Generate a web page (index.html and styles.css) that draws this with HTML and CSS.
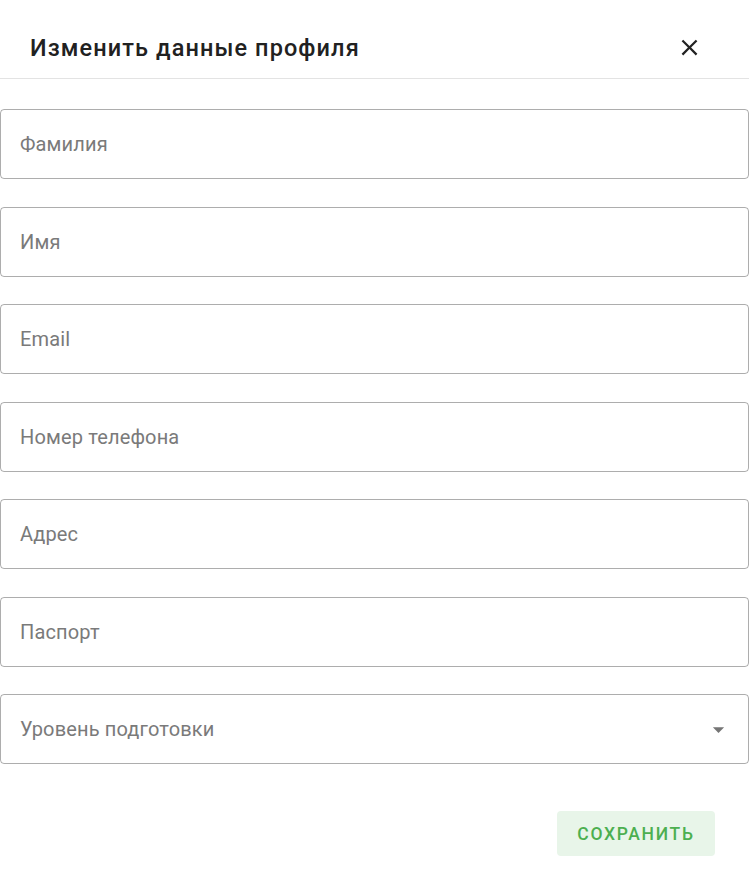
FILE: index.html
```html
<!DOCTYPE html>
<html lang="ru">
<head>
<meta charset="utf-8">
<link rel="stylesheet" href="styles.css">
</head>
<body>
<div class="dialog">
  <div class="dialog-header">
    <h2 class="dialog-title">Изменить данные профиля</h2>
    <button class="close-btn" aria-label="Закрыть">
      <svg viewBox="0 0 24 24" width="27" height="27"><path d="M19 6.41 17.59 5 12 10.59 6.41 5 5 6.41 10.59 12 5 17.59 6.41 19 12 13.41 17.59 19 19 17.59 13.41 12z" fill="#222"/></svg>
    </button>
  </div>
  <div class="dialog-content">
    <div class="field"><span class="placeholder">Фамилия</span></div>
    <div class="field"><span class="placeholder">Имя</span></div>
    <div class="field"><span class="placeholder">Email</span></div>
    <div class="field"><span class="placeholder">Номер телефона</span></div>
    <div class="field"><span class="placeholder">Адрес</span></div>
    <div class="field"><span class="placeholder">Паспорт</span></div>
    <div class="field select"><span class="placeholder">Уровень подготовки</span>
      <svg class="arrow" viewBox="0 0 24 24" width="27" height="27"><path d="M7 10l5 5 5-5z" fill="#757575"/></svg>
    </div>
  </div>
  <div class="dialog-actions">
    <button class="save-btn">Сохранить</button>
  </div>
</div>
</body>
</html>
```
FILE: styles.css
```css
* { box-sizing: border-box; }
html, body { margin: 0; padding: 0; background: #fff; }
body { font-family: Roboto, "Noto Sans", sans-serif; width: 749px; height: 873px; overflow: hidden; }
.dialog { width: 749px; background: #fff; }
.dialog-header {
  height: 79px;
  display: flex;
  align-items: center;
  justify-content: space-between;
  padding: 17px 46px 0 30px;
  border-bottom: 1px solid #e3e3e3;
}
.dialog-title {
  margin: 0;
  font-size: 23.5px;
  font-weight: 500;
  color: #212121;
  letter-spacing: 1.1px;
}
.close-btn {
  border: none;
  background: none;
  padding: 0;
  width: 27px;
  height: 27px;
  display: flex;
  cursor: pointer;
}
.dialog-content {
  padding-top: 30px;
  display: flex;
  flex-direction: column;
  gap: 27.5px;
}
.field {
  height: 70px;
  border: 1px solid rgba(0,0,0,0.32);
  border-radius: 4px;
  display: flex;
  align-items: center;
  padding: 0 16px 0 19px;
}
.placeholder {
  font-size: 20px;
  color: #7a7a7a;
  letter-spacing: 0.15px;
}
.select { justify-content: space-between; }
.dialog-actions {
  display: flex;
  justify-content: flex-end;
  padding: 47px 34px 0 0;
}
.save-btn {
  width: 158px;
  height: 45px;
  border: none;
  border-radius: 4px;
  background: #e8f5e9;
  color: #4caf50;
  font-family: Roboto, sans-serif;
  font-weight: 500;
  font-size: 17.5px;
  letter-spacing: 1.7px;
  text-transform: uppercase;
}
```
